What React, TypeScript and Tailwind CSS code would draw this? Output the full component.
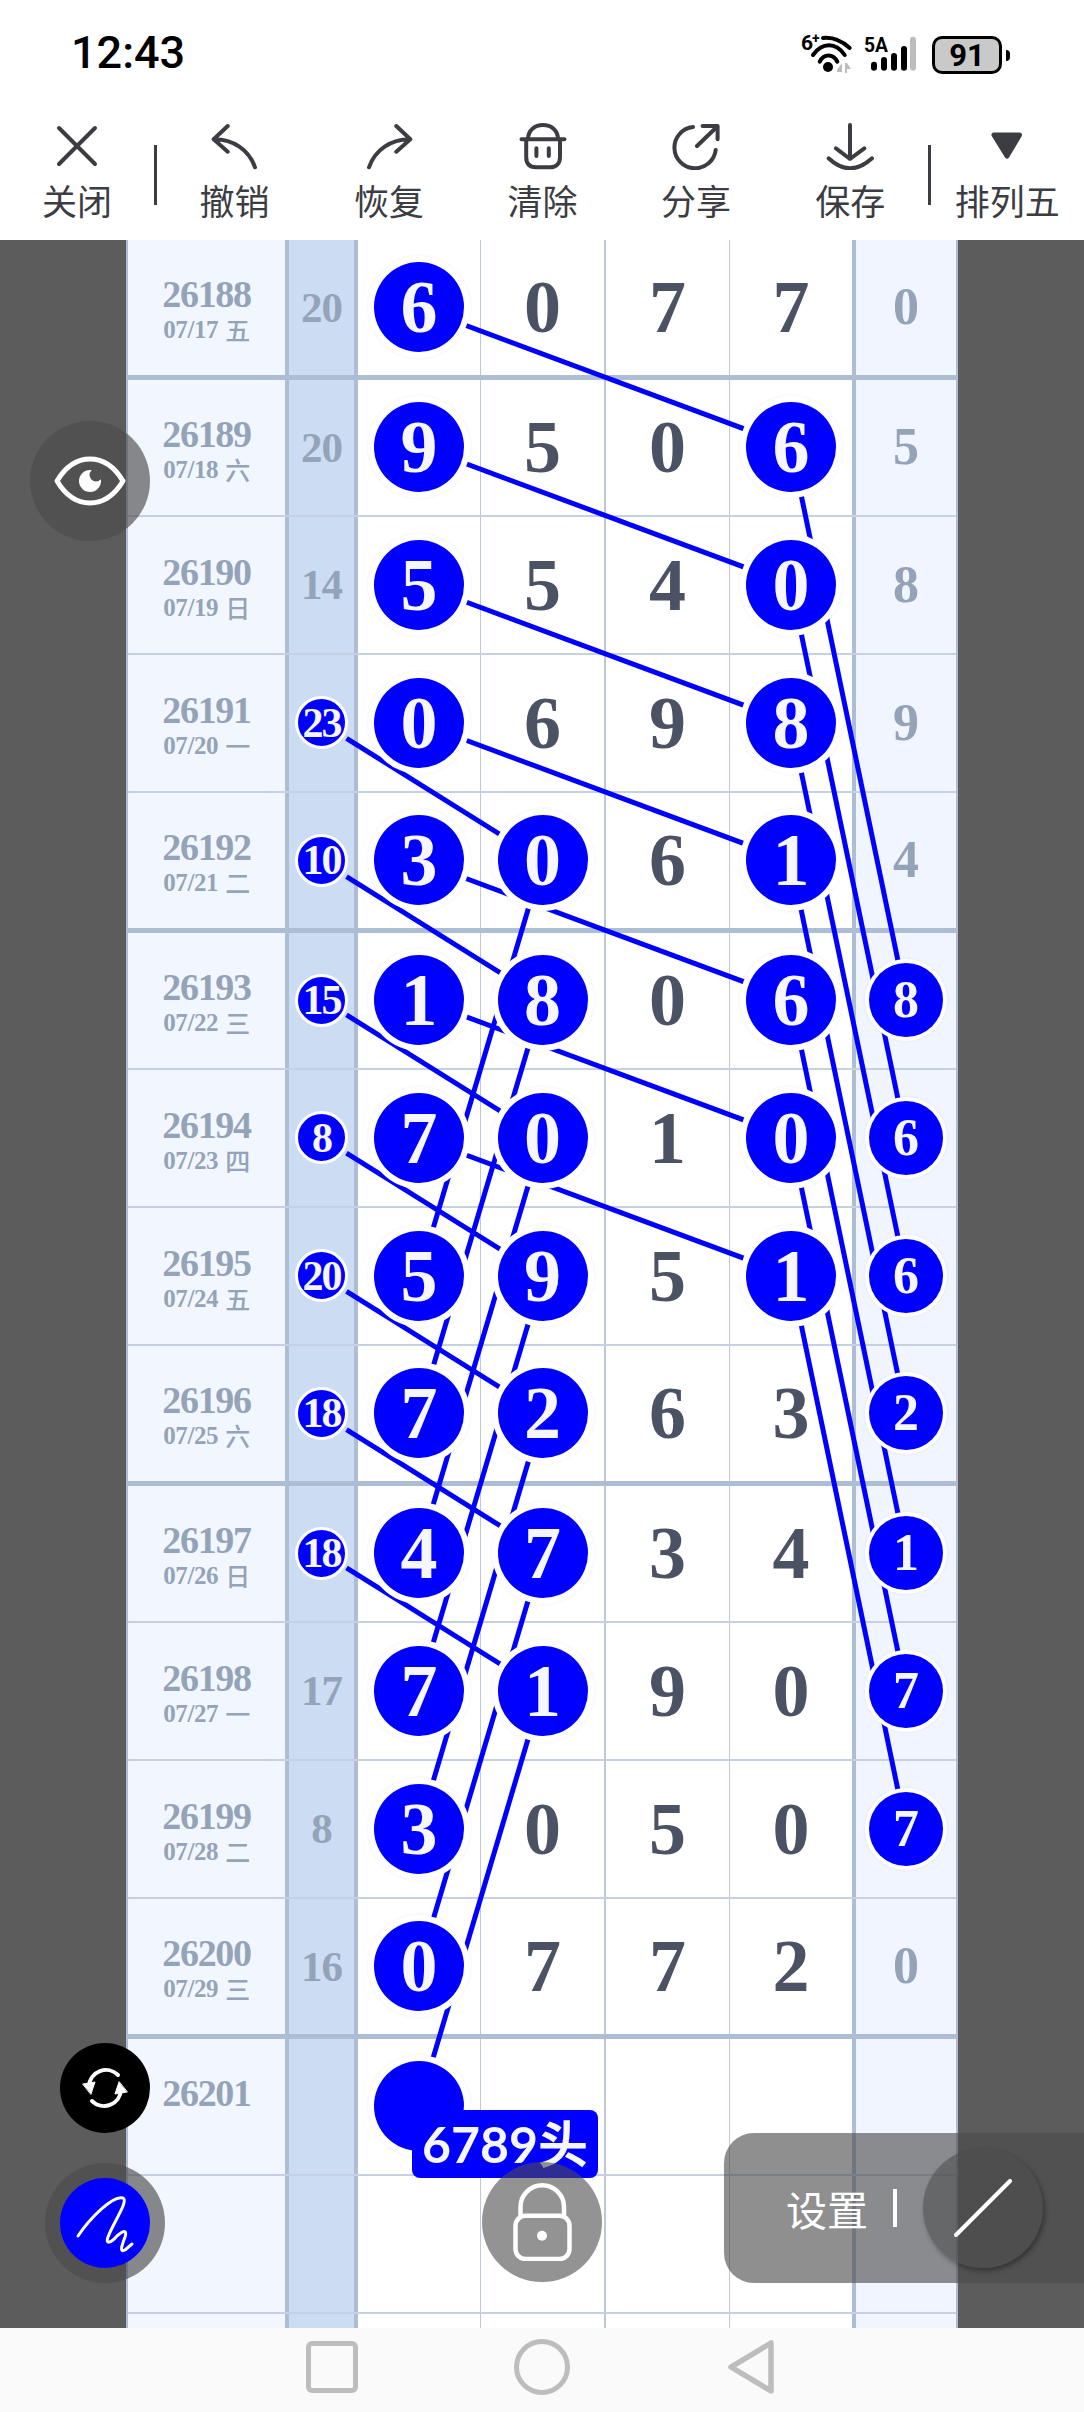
import clsx from 'clsx';

// 走势图页面 — 排列五 号码连线

interface Row {
  issue: string;
  date: string;
  week?: string;
  sum: string;
  sumHit?: boolean;
  nums: string[];
  hits: number[];
  right: string;
  rightHit?: boolean;
}

const ROWS: Row[] = [
  { issue: '26188', date: '07/17', week: '五', sum: '20', nums: ['6', '0', '7', '7'], hits: [0], right: '0' },
  { issue: '26189', date: '07/18', week: '六', sum: '20', nums: ['9', '5', '0', '6'], hits: [0, 3], right: '5' },
  { issue: '26190', date: '07/19', week: '日', sum: '14', nums: ['5', '5', '4', '0'], hits: [0, 3], right: '8' },
  { issue: '26191', date: '07/20', week: '一', sum: '23', sumHit: true, nums: ['0', '6', '9', '8'], hits: [0, 3], right: '9' },
  { issue: '26192', date: '07/21', week: '二', sum: '10', sumHit: true, nums: ['3', '0', '6', '1'], hits: [0, 1, 3], right: '4' },
  { issue: '26193', date: '07/22', week: '三', sum: '15', sumHit: true, nums: ['1', '8', '0', '6'], hits: [0, 1, 3], right: '8', rightHit: true },
  { issue: '26194', date: '07/23', week: '四', sum: '8', sumHit: true, nums: ['7', '0', '1', '0'], hits: [0, 1, 3], right: '6', rightHit: true },
  { issue: '26195', date: '07/24', week: '五', sum: '20', sumHit: true, nums: ['5', '9', '5', '1'], hits: [0, 1, 3], right: '6', rightHit: true },
  { issue: '26196', date: '07/25', week: '六', sum: '18', sumHit: true, nums: ['7', '2', '6', '3'], hits: [0, 1], right: '2', rightHit: true },
  { issue: '26197', date: '07/26', week: '日', sum: '18', sumHit: true, nums: ['4', '7', '3', '4'], hits: [0, 1], right: '1', rightHit: true },
  { issue: '26198', date: '07/27', week: '一', sum: '17', nums: ['7', '1', '9', '0'], hits: [0, 1], right: '7', rightHit: true },
  { issue: '26199', date: '07/28', week: '二', sum: '8', nums: ['3', '0', '5', '0'], hits: [0], right: '7', rightHit: true },
  { issue: '26200', date: '07/29', week: '三', sum: '16', nums: ['0', '7', '7', '2'], hits: [0], right: '0' },
  { issue: '26201', date: '', sum: '', nums: ['', '', '', ''], hits: [0], right: '' },
  { issue: '', date: '', sum: '', nums: ['', '', '', ''], hits: [], right: '' },
  { issue: '', date: '', sum: '', nums: ['', '', '', ''], hits: [], right: '' },
];

const THICK = [0, 4, 8, 12];

// 连线坐标 (相对表格内容区)
const rowY = (i: number) => 68 + 138.25 * i;
const X = { sum: 193.5, c1: 291, c2: 414.5, c4: 663, right: 778 };

function buildLines() {
  const out: { x1: number; y1: number; x2: number; y2: number }[] = [];
  for (let i = 0; i <= 6; i++) out.push({ x1: X.c1, y1: rowY(i), x2: X.c4, y2: rowY(i + 1) });
  for (let i = 3; i <= 9; i++) {
    // 小圆这一端留一点空隙
    const dx = X.c2 - X.sum;
    const dy = 138.25;
    const len = Math.hypot(dx, dy);
    out.push({ x1: X.sum + (dx / len) * 29.5, y1: rowY(i) + (dy / len) * 29.5, x2: X.c2, y2: rowY(i + 1) });
  }
  for (let i = 1; i <= 7; i++) out.push({ x1: X.c4, y1: rowY(i), x2: X.right, y2: rowY(i + 4) });
  for (let i = 4; i <= 10; i++) out.push({ x1: X.c2, y1: rowY(i), x2: X.c1, y2: rowY(i + 3) });
  return out;
}

const LINES = buildLines();

const SERIF = "font-['Liberation_Serif','Noto_Sans_CJK_SC',serif] font-bold";
const CJK = "font-['Noto_Sans_CJK_SC',sans-serif]";

function Tool({ label, width, children }: { label: string; width: string; children: React.ReactNode }) {
  return (
    <div className={clsx('flex flex-col items-center', width)}>
      <svg width="48" height="48" viewBox="0 0 48 48" fill="none" stroke="#3c3c43" strokeWidth="4" strokeLinecap="round" strokeLinejoin="round">
        {children}
      </svg>
      <span className={clsx(CJK, 'mt-[6px] whitespace-nowrap text-[35px] leading-[48px] text-[#3c3c43]')}>{label}</span>
    </div>
  );
}

function Divider() {
  return <div className="mt-[23px] h-[60px] w-[3px] flex-none bg-[#3c3c43]" />;
}

function Ball({ value }: { value: string }) {
  return (
    <div className={clsx(SERIF, 'relative z-20 flex size-[90px] items-center justify-center rounded-full bg-[#0000ff] text-[74px] leading-none text-[#f6f6ff] shadow-[0_0_0_6px_#fff,0_0_3px_7px_rgba(0,0,0,0.04)]')}>
      {value}
    </div>
  );
}

function TableRow({ row, index }: { row: Row; index: number }) {
  const thick = THICK.includes(index);
  const prevThick = THICK.includes(index - 1);
  return (
    <div
      className={clsx(
        'grid grid-cols-[161px_69px_123px_125px_124px_126px_100px] bg-white',
        thick ? 'h-[139.75px] border-b-[5px] border-[#adbdd4]' : 'border-b-2 border-[#c5d1e2]',
        !thick && (prevThick ? 'h-[136.75px]' : 'h-[138.25px]'),
      )}
    >
      <div className="flex flex-col items-center justify-center border-r-4 border-[#adbdd4] bg-[#f2f7ff] pt-[7px] text-[#94a3b8]">
        <span className={clsx(SERIF, 'text-[38px] leading-[38px] tracking-[-1.3px]')}>{row.issue || '\u00a0'}</span>
        <span className={clsx(SERIF, 'flex items-center gap-[7px] text-[25px] leading-[33px] tracking-[-0.4px]')}>
          {row.date || '\u00a0'}
          {row.week && <span className={clsx(CJK, 'text-[25px] font-medium')}>{row.week}</span>}
        </span>
      </div>
      <div className="flex items-center justify-center border-r-4 border-[#adbdd4] bg-[#cbdcf3]">
        {row.sumHit ? (
          <div className={clsx(SERIF, 'relative z-20 flex size-[53px] items-center justify-center rounded-full border-[3px] border-white bg-[#0000ff] text-[42px] leading-none tracking-[-2px] text-[#f6f6ff]')}>
            {row.sum}
          </div>
        ) : (
          <span className={clsx(SERIF, 'text-[43px] leading-none tracking-[-1px] text-[#94a3b8]')}>{row.sum}</span>
        )}
      </div>
      {row.nums.map((n, i) => (
        <div
          key={i}
          className={clsx(
            'flex items-center justify-center border-[#bcc8da]',
            i === 0 && 'border-r',
            i === 1 && 'border-r-2',
            i === 2 && 'border-r',
            i === 3 && 'border-r-4 border-r-[#adbdd4]',
          )}
        >
          {row.hits.includes(i) ? (
            <Ball value={n} />
          ) : (
            <span className={clsx(SERIF, 'text-[74px] leading-none text-[#4b5263]')}>{n}</span>
          )}
        </div>
      ))}
      <div className="flex items-center justify-center bg-[#f0f5ff]">
        {row.rightHit ? (
          <div className={clsx(SERIF, 'relative z-20 flex size-[74px] items-center justify-center rounded-full bg-[#0000ff] text-[52px] leading-none text-[#f6f6ff] shadow-[0_0_0_4px_#fff,0_0_3px_5px_rgba(0,0,0,0.04)]')}>
            {row.right}
          </div>
        ) : (
          <span className={clsx(SERIF, 'text-[52px] leading-none text-[#94a3b8]')}>{row.right}</span>
        )}
      </div>
    </div>
  );
}

export default function App() {
  return (
    <div className="relative flex h-[2412px] w-[1084px] flex-col overflow-hidden bg-white">
      {/* 状态栏 */}
      <div className="flex h-[106px] flex-none items-start justify-between pl-[71px] pr-[74px] pt-[26px]">
        <span className="font-['Roboto',sans-serif] text-[45px] font-medium leading-[54px] text-black">12:43</span>
        <div className="flex items-center pt-[1px]">
          <svg width="60" height="56" viewBox="0 -6 60 56" fill="none" className="flex-none">
            <text x="3" y="17" fontFamily="Roboto, sans-serif" fontWeight="700" fontSize="21" fill="#000">6</text>
            <text x="14" y="10" fontFamily="Roboto, sans-serif" fontWeight="700" fontSize="14" fill="#000">+</text>
            <path d="M25 5 C34 4 44 8 51.7 15" stroke="#000" strokeWidth="4" strokeLinecap="round" />
            <path d="M15 22 C24 9 38 9 46.7 22" stroke="#000" strokeWidth="4" strokeLinecap="round" />
            <path d="M21.7 28.7 C26 20.5 35 20.5 39.3 28.7" stroke="#000" strokeWidth="4" strokeLinecap="round" />
            <circle cx="30" cy="34" r="5" fill="#000" />
            <path d="M39 37 L44 30 V39 H39Z M47 30 H49 L53 36 H49 V40 H47Z" fill="#bdbdbd" />
          </svg>
          <svg width="62" height="44" viewBox="0 0 62 44" fill="none" className="ml-[6px] flex-none">
            <text x="0" y="19" fontFamily="Roboto, sans-serif" fontWeight="700" fontSize="21" fill="#000" textLength="24" lengthAdjust="spacingAndGlyphs">5A</text>
            <rect x="7" y="28.7" width="6" height="9" rx="3" fill="#000" />
            <rect x="17" y="24" width="6" height="13.7" rx="3" fill="#000" />
            <rect x="27" y="20" width="6" height="17.7" rx="3" fill="#000" />
            <rect x="37" y="13" width="6" height="24.7" rx="3" fill="#000" />
            <rect x="46" y="3.7" width="6" height="34" rx="3" fill="#bdbdbd" />
          </svg>
          <div className="ml-[6px] flex h-[38px] w-[70px] items-center justify-center rounded-[10px] border-[3px] border-black bg-[#c9c9c9] font-['Roboto',sans-serif] text-[31px] font-bold leading-none text-black">
            91
          </div>
          <div className="ml-[4px] h-[11px] w-[4px] rounded-r-full bg-black" />
        </div>
      </div>

      {/* 工具栏 */}
      <div className="flex h-[134px] flex-none items-start pt-[16px]">
        <Tool label="关闭" width="w-[154px]">
          <path d="M6 6 L42 42 M42 6 L6 42" />
        </Tool>
        <Divider />
        <Tool label="撤销" width="w-[155px]">
          <path d="M16.7 4 L2.7 17.3 L16.7 29.7 M2.7 17.3 C22 17 38 28 44 45.3" />
        </Tool>
        <Tool label="恢复" width="w-[154px]">
          <path d="M31.3 4 L45.3 17.3 L31.3 29.7 M45.3 17.3 C26 17 10 28 4 45.3" />
        </Tool>
        <Tool label="清除" width="w-[153px]">
          <path d="M2.5 17.3 H45.5 M9 17.3 C9 8 16 3 24 3 C32 3 39 8 39 17.3 M7.2 17.3 V35 C7.2 42 11 45.3 17 45.3 H31 C37 45.3 41 42 41 35 V17.3 M17.4 26.3 V34 M29.8 26.3 V34" />
        </Tool>
        <Tool label="分享" width="w-[154px]">
          <path d="M21 5 A20.7 20.7 0 1 0 43.7 28 M25 24 L45 4.7 M30.6 4 H45.6 V17.3" />
        </Tool>
        <Tool label="保存" width="w-[154.5px]">
          <path d="M24 3 V36 M10 26.3 L24 37 L38.3 26.3 M2.6 36.3 Q24 56.3 46 36.3" />
        </Tool>
        <Divider />
        <Tool label="排列五" width="w-[153.5px]">
          <path d="M11 13 H36.5 L24 34 Z" fill="#3c3c43" stroke="#3c3c43" strokeWidth="5" />
        </Tool>
      </div>

      {/* 表格 */}
      <div className="min-h-0 flex-1 overflow-hidden bg-[#5c5c5c]">
        <div className="relative ml-[126px] h-full w-[832px] overflow-hidden border-x-2 border-[#adbdd4]">
          {ROWS.map((row, i) => (
            <TableRow key={i} row={row} index={i} />
          ))}
          <svg className="absolute left-0 top-0 z-10 h-full w-full" fill="none" stroke="#0000ff" strokeWidth="5">
            {LINES.map((l, i) => (
              <line key={i} x1={l.x1} y1={l.y1} x2={l.x2} y2={l.y2} />
            ))}
          </svg>
        </div>
      </div>

      {/* 导航栏 */}
      <div className="flex h-[84px] flex-none items-center bg-[#fafafa] pb-[6px] pl-[306px]">
        <div className="size-[52px] rounded-[6px] border-[5px] border-[#bdbdbd]" />
        <div className="ml-[156px] size-[56px] rounded-full border-[5px] border-[#bdbdbd]" />
        <svg width="50" height="60" viewBox="0 0 50 60" fill="none" className="ml-[156px]">
          <path d="M45 6 V54 L5 30 Z" stroke="#bdbdbd" strokeWidth="5.5" strokeLinejoin="round" />
        </svg>
      </div>

      {/* 悬浮按钮 */}
      <div className="absolute left-[30px] top-[421px] z-30 flex size-[120px] items-center justify-center rounded-full bg-[rgba(75,75,75,0.65)]">
        <svg width="72" height="50" viewBox="0 0 72 50" fill="none">
          <path d="M3 25 C12 10 24 3 36 3 C48 3 60 10 69 25 C60 40 48 47 36 47 C24 47 12 40 3 25Z" stroke="#fff" strokeWidth="5" strokeLinejoin="round" />
          <circle cx="36" cy="25" r="11" fill="#fff" />
          <circle cx="42" cy="19" r="6.5" fill="#525252" />
        </svg>
      </div>

      <div className="absolute left-[60px] top-[2043px] z-30 flex size-[90px] items-center justify-center rounded-full bg-black">
        <svg width="50" height="48" viewBox="0 0 50 48" fill="none" stroke="#fff" strokeWidth="4" strokeLinecap="round">
          <path d="M9 22 A17 17 0 0 1 38 11" />
          <path d="M41 26 A17 17 0 0 1 12 37" />
          <path d="M3 20 L15 18 L11 30 Z" fill="#fff" strokeWidth="1" strokeLinejoin="round" />
          <path d="M47 28 L35 30 L39 18 Z" fill="#fff" strokeWidth="1" strokeLinejoin="round" />
        </svg>
      </div>

      <div className="absolute left-[45px] top-[2163px] z-30 flex size-[120px] items-center justify-center rounded-full bg-[rgba(75,75,75,0.65)]">
        <div className="flex size-[90px] items-center justify-center rounded-full bg-[#0000ff]">
          <svg width="60" height="60" viewBox="0 0 60 60" fill="none" stroke="#fff" strokeWidth="3" strokeLinecap="round" strokeLinejoin="round">
            <path d="M3 43 C15 25 38 2 48 5 C54 8 38 30 33 44 C30 52 36 50 42 43 C50 36 52 38 50 44 C47 52 44 60 50 57 L57 51" />
          </svg>
        </div>
      </div>

      <div className="absolute left-[412px] top-[2110px] z-30 flex h-[68px] w-[186px] items-center justify-center rounded-[8px] bg-[#0000ff] font-['Lato','Noto_Sans_CJK_SC',sans-serif] text-[50px] font-bold leading-none text-[#f6f6ff]">
        6789头
      </div>

      <div className="absolute left-[482px] top-[2162px] z-40 flex size-[120px] items-center justify-center rounded-full bg-[rgba(75,75,75,0.6)]">
        <svg width="60" height="78" viewBox="0 0 60 78" fill="none" stroke="#fff" strokeWidth="4.5">
          <path d="M8.5 33 V24 A21.75 21.75 0 0 1 52 24 V33" />
          <rect x="3.5" y="32.7" width="54" height="43.3" rx="10" />
          <circle cx="30" cy="52.7" r="5" fill="#fff" stroke="none" />
        </svg>
      </div>

      <div className="absolute left-[724px] top-[2133px] z-30 flex h-[150px] w-[360px] items-center rounded-l-[30px] bg-[rgba(75,75,75,0.62)] pl-[62px]">
        <span className={clsx(CJK, 'text-[41px] leading-none text-white')}>设置</span>
        <div className="ml-[25px] h-[38px] w-[4px] bg-white" />
        <div className="ml-[26px] flex size-[120px] items-center justify-center rounded-full bg-[rgba(75,75,75,0.57)] shadow-[2px_3px_5px_rgba(0,0,0,0.35)]">
          <svg width="58" height="58" viewBox="0 0 58 58" fill="none" stroke="#fff" strokeWidth="4" strokeLinecap="round">
            <path d="M2 56 L56 2" />
          </svg>
        </div>
      </div>
    </div>
  );
}
